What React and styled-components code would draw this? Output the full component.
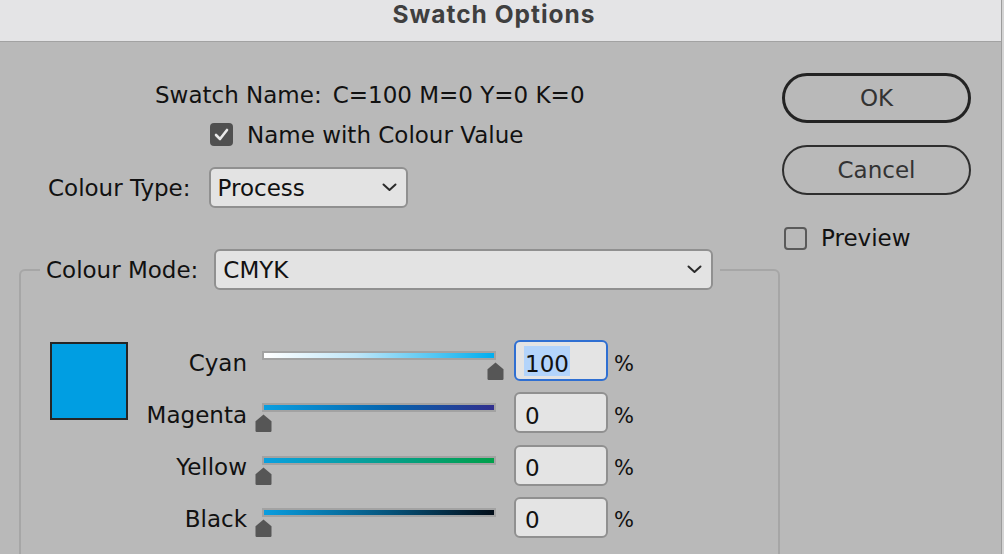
import React from "react"
import styled, {createGlobalStyle} from "styled-components"

const GlobalStyle = createGlobalStyle`
body{
    margin: 0;
    background: #d4d4d4;
}
`

const Dialog = styled.div`
width: 1001px;
height: 554px;
overflow: hidden;
display: flex;
flex-direction: column;
background: #b9b9b9;
border-right: 1px solid #9c9c9c;
font-family: "DejaVu Sans", "Verdana", sans-serif;
font-size: 23px;
color: #111;
`

const TitleBar = styled.header`
height: 41px;
flex-shrink: 0;
display: flex;
justify-content: center;
padding-right: 13px;
background: #e4e4e6;
border-bottom: 1px solid #a2a2a2;

h1{
    margin: 0;
    font-family: Inter, "Liberation Sans", sans-serif;
    font-weight: 700;
    font-size: 24.5px;
    line-height: 29px;
    letter-spacing: 1px;
    color: #3f3f3f;
}
`

const Body = styled.div`
display: flex;
padding-left: 19px;
`

const LeftCol = styled.div`
width: 761px;
display: flex;
flex-direction: column;
align-items: flex-start;
`

const NameRow = styled.div`
display: flex;
gap: 11px;
margin: 39px 0 0 136px;
line-height: 28px;
`

const CheckRow = styled.label`
display: flex;
align-items: center;
gap: 14px;
height: 28px;
margin: ${p => p.$top}px 0 0 ${p => p.$indent}px;
`

const Box = styled.span`
width: 23px;
height: 23px;
box-sizing: border-box;
border-radius: 4px;
display: flex;
align-items: center;
justify-content: center;
background: ${p => p.$checked ? "#505050" : "transparent"};
border: ${p => p.$checked ? "none" : "2px solid #5a5a5a"};
`

const FieldRow = styled.div`
display: flex;
align-items: center;
gap: ${p => p.$gap}px;
margin: ${p => p.$margin};
line-height: 28px;
`

const Select = styled.div`
width: ${p => p.$width}px;
height: 41px;
box-sizing: border-box;
display: flex;
align-items: center;
justify-content: space-between;
padding: 0 9px 0 7px;
background: #e3e3e3;
border: 2px solid #909090;
border-radius: 6px;
`

const Fieldset = styled.fieldset`
width: 761px;
height: 420px;
box-sizing: border-box;
margin: 41px 0 0 0;
padding: 50px 0 0 19px;
border: 2px solid #a6a6a6;
border-radius: 6px;
min-width: 0;
`

const Legend = styled.legend`
padding: 0 7px 0 6px;
`

const Panel = styled.div`
display: flex;
align-items: flex-start;
margin-left: 10px;
`

const Swatch = styled.div`
width: 78px;
height: 78px;
box-sizing: border-box;
margin-top: 2px;
background: ${p => p.$color};
border: 2px solid #252525;
`

const Channels = styled.div`
display: flex;
flex-direction: column;
gap: 11.3px;
`

const ChannelRow = styled.div`
display: flex;
align-items: center;
height: 41px;
`

const ChannelLabel = styled.span`
width: 119px;
text-align: right;
line-height: 28px;
margin-top: 4px;
`

const SliderCell = styled.div`
position: relative;
width: 234px;
height: 41px;
margin-left: 15px;
`

const Track = styled.div`
height: 9px;
margin-top: 11px;
box-sizing: border-box;
border: 2px solid #a2a2a2;
background: ${p => p.$gradient};
`

const Thumb = styled.svg`
position: absolute;
top: 22px;
`

const Field = styled.div`
width: 94px;
height: 41px;
box-sizing: border-box;
margin-left: 18px;
padding-left: 8px;
display: flex;
align-items: center;
background: #e4e4e4;
border: 2px solid ${p => p.$focused ? "#2f6fd2" : "#909090"};
border-radius: 6px;

span{
    display: inline-block;
    height: 30px;
    box-sizing: border-box;
    padding: 6px 1px 0;
    line-height: 24px;
    background: ${p => p.$focused ? "#b3d4fb" : "transparent"};
}
`

const Percent = styled.span`
margin: 6px 0 0 6px;
font-size: 21px;
`

const RightCol = styled.div`
width: 189px;
margin-left: 2px;
padding-top: 31px;
display: flex;
flex-direction: column;
`

const Button = styled.button`
height: 50px;
margin-top: ${p => p.$top}px;
border-radius: 25px;
border: ${p => p.$primary ? "3px solid #232323" : "2px solid #2e2e2e"};
background: transparent;
font: inherit;
color: #333;
padding: 0;
`

const Chevron = () => (
    <svg width="15" height="9" viewBox="0 0 15 9">
        <polyline points="1.5,1.5 7.5,7 13.5,1.5" fill="none" stroke="#2a2a2a" strokeWidth="2" strokeLinecap="round" strokeLinejoin="round" />
    </svg>
)

const channels = [
    {name: "Cyan", value: 100, focused: true, gradient: "linear-gradient(to right, #ffffff 0%, #bfe6f8 40%, #00aeef 100%)"},
    {name: "Magenta", value: 0, gradient: "linear-gradient(to right, #0a9fe0 0%, #0563ad 55%, #312f8e 100%)"},
    {name: "Yellow", value: 0, gradient: "linear-gradient(to right, #0aa0e0 0%, #05a08a 55%, #00a04a 100%)"},
    {name: "Black", value: 0, gradient: "linear-gradient(to right, #0a9ee0 0%, #06537a 55%, #020d18 100%)"},
]

export default function App(){
    return(
        <Dialog>
            <GlobalStyle />
            <TitleBar><h1>Swatch Options</h1></TitleBar>
            <Body>
                <LeftCol>
                    <NameRow>
                        <span>Swatch Name:</span>
                        <span>C=100 M=0 Y=0 K=0</span>
                    </NameRow>
                    <CheckRow $top={11.5} $indent={191}>
                        <Box $checked>
                            <svg width="15" height="13" viewBox="0 0 15 13">
                                <polyline points="2,7 6,11 13,2" fill="none" stroke="#e9e9e9" strokeWidth="2.6" strokeLinecap="round" strokeLinejoin="round" />
                            </svg>
                        </Box>
                        <span>Name with Colour Value</span>
                    </CheckRow>
                    <FieldRow $gap={18} $margin="18.5px 0 0 29px">
                        <span>Colour Type:</span>
                        <Select $width={199}>
                            <span>Process</span>
                            <Chevron />
                        </Select>
                    </FieldRow>
                    <Fieldset>
                        <Legend>
                            <FieldRow $gap={16} $margin="0">
                                <span>Colour Mode:</span>
                                <Select $width={499}>
                                    <span>CMYK</span>
                                    <Chevron />
                                </Select>
                            </FieldRow>
                        </Legend>
                        <Panel>
                            <Swatch $color="#009ee2" />
                            <Channels>
                                {channels.map(c => (
                                    <ChannelRow key={c.name}>
                                        <ChannelLabel>{c.name}</ChannelLabel>
                                        <SliderCell>
                                            <Track $gradient={c.gradient} />
                                            <Thumb width="17" height="18" viewBox="0 0 17 18" style={{left: 1 + c.value / 100 * 232 - 8.5}}>
                                                <path d="M8.5 0.5 L16.5 7.2 V16.8 Q16.5 18 15.3 18 H1.7 Q0.5 18 0.5 16.8 V7.2 Z" fill="#565656" />
                                            </Thumb>
                                        </SliderCell>
                                        <Field $focused={c.focused}>
                                            <span>{c.value}</span>
                                        </Field>
                                        <Percent>%</Percent>
                                    </ChannelRow>
                                ))}
                            </Channels>
                        </Panel>
                    </Fieldset>
                </LeftCol>
                <RightCol>
                    <Button $primary $top={0}>OK</Button>
                    <Button $top={22}>Cancel</Button>
                    <CheckRow $top={29} $indent={2}>
                        <Box />
                        <span>Preview</span>
                    </CheckRow>
                </RightCol>
            </Body>
        </Dialog>
    )
}
